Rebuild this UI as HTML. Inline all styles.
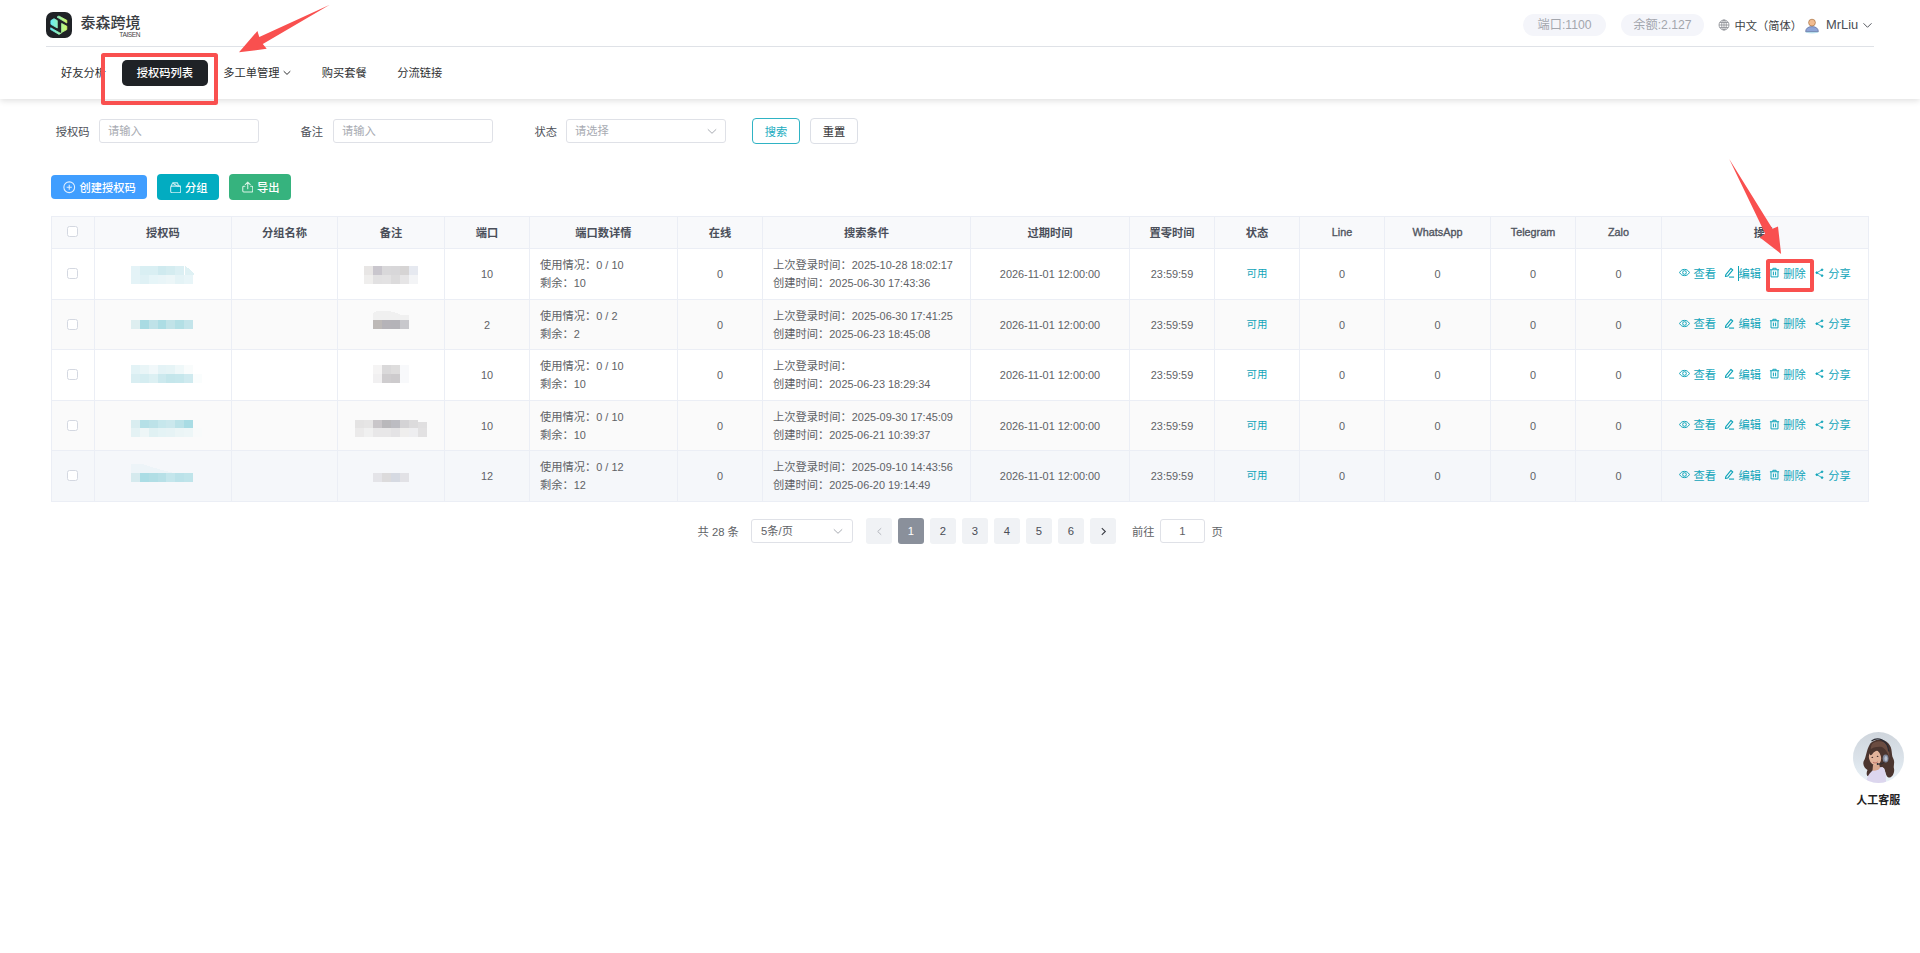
<!DOCTYPE html>
<html lang="zh-CN">
<head>
<meta charset="utf-8">
<title>授权码列表</title>
<style>
*{box-sizing:border-box;margin:0;padding:0}
html,body{width:1920px;height:953px;overflow:hidden;background:#fff}
body{font-family:"Liberation Sans","Noto Sans CJK SC",sans-serif;font-size:11.25px;color:#606266;position:relative}
.abs{position:absolute}
/* header */
#hdr{position:absolute;left:0;top:0;width:1920px;height:99px;background:#fff;box-shadow:0 2px 6px rgba(0,0,0,.12)}
#hline{position:absolute;left:46px;top:46px;width:1828px;height:1px;background:#dfe2e7}
#logo{position:absolute;left:46px;top:12px;width:26px;height:26px}
#brand{position:absolute;left:80.5px;top:12px;font-size:15px;font-weight:500;color:#3a3d42;line-height:22px;white-space:nowrap;letter-spacing:0}
#brand2{position:absolute;left:110px;top:30.5px;width:30px;font-size:6.6px;color:#444;line-height:8px;text-align:right;letter-spacing:-.45px}
.pill{position:absolute;top:14px;height:22px;border-radius:11px;background:#f4f5fa;color:#a3a6ad;font-size:12.2px;line-height:23.6px;text-align:center;white-space:nowrap}
.nav{position:absolute;top:60px;height:26px;line-height:26px;font-size:11.25px;color:#303133;white-space:nowrap}
.nav.on{left:122px;width:86px;background:#1f2226;color:#fff;border-radius:5px;text-align:center;font-weight:500}
/* filter */
.lbl{position:absolute;top:119.5px;height:24px;line-height:24px;font-size:11.25px;color:#4d5058;white-space:nowrap}
.inp{position:absolute;top:119px;height:24px;width:160px;border:1px solid #dfe1e7;border-radius:3px;background:#fff;line-height:23.5px;padding-left:8px;font-size:11.25px;color:#a8abb2;white-space:nowrap}
.btn{position:absolute;border-radius:4px;text-align:center;white-space:nowrap;font-size:11.25px}
/* table */
#tbl{position:absolute;left:51px;top:216px;width:1818px;border-collapse:collapse;table-layout:fixed;font-size:11.25px}
.n{font-size:10.9px}
#tbl th.n{font-size:10.8px;color:#50555f;font-weight:400;-webkit-text-stroke:.35px #50555f}
#tbl th,#tbl td{border:1px solid #ebeef5;text-align:center;vertical-align:middle;padding:0;overflow:hidden;white-space:nowrap}
#tbl th{height:32px;padding-bottom:2px;background:#f8f9fb;color:#4a4f5a;font-weight:700}
#tbl td{background:#fff;color:#606266;line-height:18px}
#tbl tr.s td{background:#fafafa}
#tbl tr.h td{background:#f5f7fa}
#tbl td.l{text-align:left;padding-left:10px}
.cb{display:inline-block;width:11px;height:11px;border:1px solid #d4d8e1;border-radius:2.5px;background:#fff;vertical-align:middle;position:relative;left:-.7px;top:-1.5px}
#tbl th .cb{top:-.6px}
#tbl td.ok{color:#0fa4b9;font-size:10.4px}
#tbl td.ops{color:#0fa4b9;font-size:11.25px;text-align:left !important;padding-left:17px !important;padding-bottom:1px !important}
.ops span{display:inline-block;margin-right:7.9px}
.ops svg{width:11px;height:11px;vertical-align:-.8px;margin-right:3.5px}
.mz{position:absolute}
/* pager */
.pg{position:absolute;top:518px;width:26px;height:26px;line-height:27px;border-radius:3px;background:#f0f2f5;color:#4a4d55;text-align:center;font-size:11.25px}
.pg.on{background:#8a909b;color:#fff}
.pt{position:absolute;top:518.7px;height:26px;line-height:26px;font-size:11.25px;color:#606266;white-space:nowrap}
</style>
</head>
<body>
<div id="hdr">
<svg id="logo" viewBox="0 0 26 26"><defs><linearGradient id="lg" x1="4" y1="0" x2="21.5" y2="0" gradientUnits="userSpaceOnUse"><stop offset="0" stop-color="#63ecff"/><stop offset=".5" stop-color="#96f2b4"/><stop offset="1" stop-color="#d6fb62"/></linearGradient></defs>
<rect width="26" height="26" rx="7" fill="#1f2226"/>
<g fill="url(#lg)" stroke="url(#lg)" stroke-width=".8" stroke-linejoin="round">
<path d="M4.9 8.6L8 6.7L11.3 8.6V16L4.9 12.3Z"/>
<path d="M11 5.100L12.900 4L20.800 8.300V11Z"/>
<path d="M15.600 11.400L20.800 14.200V17.600L15.600 20.500Z"/>
<path d="M4.700 15.800V17.600L13 22.400L15.400 21.100V20.700L14.300 21.200Z"/>
</g></svg>
<div id="brand">泰森跨境</div>
<div id="brand2">TAISEN</div>
<div class="pill" style="left:1523px;width:83px">端口:1100</div>
<div class="pill" style="left:1621px;width:83px">余额:2.127</div>
<svg class="abs" style="left:1718px;top:19px;width:12px;height:12px" viewBox="0 0 12 12" fill="none" stroke="#8a8d93" stroke-width=".8"><circle cx="6" cy="6" r="5"/><ellipse cx="6" cy="6" rx="2.3" ry="5"/><path d="M1 6H11M6 1V11M1.8 3.5H10.2M1.8 8.5H10.2"/></svg>
<div class="abs" style="left:1734.5px;top:14.6px;line-height:22px;font-size:11.25px;color:#3c3f45;white-space:nowrap">中文（简体）</div>
<svg class="abs" style="left:1804px;top:17px;width:16px;height:17px" viewBox="0 0 16 17"><ellipse cx="8" cy="15.2" rx="6.5" ry="1.3" fill="#bfe6f2"/><path d="M1.6 14.6C1.8 11.2 4.3 9.6 8 9.6S14.2 11.2 14.4 14.6Z" fill="#8ea4d8" stroke="#5f6f9c" stroke-width=".7"/><circle cx="8" cy="5.6" r="3.4" fill="#f1bb90" stroke="#a8703f" stroke-width=".7"/></svg>
<div class="abs" style="left:1826px;top:13.7px;line-height:22px;font-size:12.9px;color:#4b4e55;white-space:nowrap">MrLiu</div>
<svg class="abs" style="left:1863px;top:21.5px;width:9px;height:7px" viewBox="0 0 9 7" fill="none" stroke="#55585f" stroke-width="1"><path d="M.5 1.300L4.500 5.300L8.500 1.300"/></svg>
<div id="hline"></div>
<div class="nav" style="left:61px">好友分析</div>
<div class="nav on">授权码列表</div>
<div class="nav" style="left:223.3px">多工单管理</div>
<svg class="abs" style="left:283px;top:70px;width:8px;height:6px" viewBox="0 0 8 6" fill="none" stroke="#303133" stroke-width="1"><path d="M.7 1.2L4 4.4L7.3 1.2"/></svg>
<div class="nav" style="left:321.7px">购买套餐</div>
<div class="nav" style="left:397.3px">分流链接</div>
</div>

<div class="lbl" style="left:55.7px">授权码</div>
<div class="inp" style="left:99px">请输入</div>
<div class="lbl" style="left:300.5px">备注</div>
<div class="inp" style="left:333px">请输入</div>
<div class="lbl" style="left:534.5px">状态</div>
<div class="inp" style="left:566px">请选择</div>
<svg class="abs" style="left:706.5px;top:128px;width:10px;height:7px" viewBox="0 0 10 7" fill="none" stroke="#a8abb2" stroke-width="1"><path d="M.8 1.3L5 5.3L9.2 1.3"/></svg>
<div class="btn" style="left:752px;top:118px;width:48px;height:26px;line-height:26px;border:1.3px solid #2fb3c4;color:#20acc0;background:#fff">搜索</div>
<div class="btn" style="left:810px;top:118px;width:48px;height:26px;line-height:26px;border:1px solid #dcdfe6;color:#303133;background:#fff">重置</div>
<div class="btn" style="left:51px;top:175px;width:96px;height:24px;line-height:24px;background:#409eff;color:#fff;font-weight:500;text-align:left"><svg class="abs" style="left:12px;top:6px;width:12.5px;height:12.5px" viewBox="0 0 13 13" fill="none" stroke="#e3f0ff" stroke-width="1.1"><circle cx="6.5" cy="6.5" r="5.6"/><path d="M6.5 3.8V9.2M3.8 6.5H9.2"/></svg><span class="abs" style="left:28.5px;top:1.2px">创建授权码</span></div>
<div class="btn" style="left:157px;top:174px;width:62px;height:26px;line-height:26px;background:#02acc1;color:#fff;font-weight:500;text-align:left"><svg class="abs" style="left:12.5px;top:7.5px;width:11.5px;height:11.5px" viewBox="0 0 12 12" fill="none" stroke="#c9eef3" stroke-width="1.1" stroke-linejoin="round"><path d="M.9 4.800L2.800 .9H7.800L9 4.200"/><path d="M3.200 1.300L7.400 4.300H11"/><rect x=".7" y="4.300" width="10.500" height="6.900" rx="1.500"/></svg><span class="abs" style="left:28px;top:1.2px">分组</span></div>
<div class="btn" style="left:229px;top:174px;width:62px;height:26px;line-height:26px;background:#36b37e;color:#fff;font-weight:500;text-align:left"><svg class="abs" style="left:12.5px;top:7px;width:11.5px;height:12px" viewBox="0 0 12 12" fill="none" stroke="#d9f3e6" stroke-width="1.1" stroke-linejoin="round" stroke-linecap="round"><path d="M6 7.8V1M3.4 3.4L6 .8L8.6 3.4"/><path d="M3 5.2H1.8Q.8 5.2 .8 6.2V10Q.8 11.2 1.8 11.2H10.2Q11.2 11.2 11.2 10V6.2Q11.2 5.2 10.2 5.2H9"/></svg><span class="abs" style="left:28px;top:1.2px">导出</span></div>

<table id="tbl"><colgroup><col style="width:43px"><col style="width:137px"><col style="width:106px"><col style="width:107px"><col style="width:85px"><col style="width:148px"><col style="width:85px"><col style="width:208px"><col style="width:159px"><col style="width:85px"><col style="width:85px"><col style="width:85px"><col style="width:106px"><col style="width:85px"><col style="width:86px"><col style="width:207px"></colgroup>
<thead><tr><th><span class="cb"></span></th><th>授权码</th><th>分组名称</th><th>备注</th><th>端口</th><th>端口数详情</th><th>在线</th><th>搜索条件</th><th>过期时间</th><th>置零时间</th><th>状态</th><th class="n">Line</th><th class="n">WhatsApp</th><th class="n">Telegram</th><th class="n">Zalo</th><th>操作</th></tr></thead>
<tbody>
<tr class="" style="height:51px"><td><span class="cb"></span></td><td></td><td></td><td></td><td class="n">10</td><td class="l">使用情况：<span class="n">0 / 10</span><br>剩余：<span class="n">10</span></td><td class="n">0</td><td class="l">上次登录时间：<span class="n">2025-10-28 18:02:17</span><br>创建时间：<span class="n">2025-06-30 17:43:36</span></td><td class="n">2026-11-01 12:00:00</td><td class="n">23:59:59</td><td class="ok">可用</td><td class="n">0</td><td class="n">0</td><td class="n">0</td><td class="n">0</td><td class="ops"><span><svg viewBox="0 0 12 12" fill="none" stroke="#0fa4b9" stroke-width="1.08"><path d="M.6 6C2 3.6 3.8 2.6 6 2.6S10 3.6 11.4 6C10 8.4 8.2 9.4 6 9.4S2 8.4 .6 6Z"/><circle cx="6" cy="6" r="2"/></svg>查看</span><span><svg viewBox="0 0 12 12" fill="none" stroke="#0fa4b9" stroke-width="1.25" stroke-linejoin="round"><path d="M2 8.2L7.6 1.6L9.6 3.2L4.2 9.8L1.6 10.4Z"/><path d="M5.5 11H11"/></svg>编辑</span><span><svg viewBox="0 0 12 12" fill="none" stroke="#0fa4b9" stroke-width="1.08"><path d="M1 3H11M4.2 3V1.4H7.8V3M2.2 3V10.8H9.8V3M4.8 5V9M7.2 5V9"/></svg>删除</span><span><svg viewBox="0 0 12 12" fill="#0fa4b9" stroke="#0fa4b9" stroke-width=".9"><circle cx="3" cy="6.200" r=".95"/><circle cx="8.800" cy="3" r=".95"/><circle cx="8.800" cy="9.400" r=".95"/><path d="M3 6.200L8.800 3M3 6.200L8.800 9.400" fill="none"/></svg>分享</span></td></tr>
<tr class="s" style="height:50px"><td><span class="cb"></span></td><td></td><td></td><td></td><td class="n">2</td><td class="l">使用情况：<span class="n">0 / 2</span><br>剩余：<span class="n">2</span></td><td class="n">0</td><td class="l">上次登录时间：<span class="n">2025-06-30 17:41:25</span><br>创建时间：<span class="n">2025-06-23 18:45:08</span></td><td class="n">2026-11-01 12:00:00</td><td class="n">23:59:59</td><td class="ok">可用</td><td class="n">0</td><td class="n">0</td><td class="n">0</td><td class="n">0</td><td class="ops"><span><svg viewBox="0 0 12 12" fill="none" stroke="#0fa4b9" stroke-width="1.08"><path d="M.6 6C2 3.6 3.8 2.6 6 2.6S10 3.6 11.4 6C10 8.4 8.2 9.4 6 9.4S2 8.4 .6 6Z"/><circle cx="6" cy="6" r="2"/></svg>查看</span><span><svg viewBox="0 0 12 12" fill="none" stroke="#0fa4b9" stroke-width="1.25" stroke-linejoin="round"><path d="M2 8.2L7.6 1.6L9.6 3.2L4.2 9.8L1.6 10.4Z"/><path d="M5.5 11H11"/></svg>编辑</span><span><svg viewBox="0 0 12 12" fill="none" stroke="#0fa4b9" stroke-width="1.08"><path d="M1 3H11M4.2 3V1.4H7.8V3M2.2 3V10.8H9.8V3M4.8 5V9M7.2 5V9"/></svg>删除</span><span><svg viewBox="0 0 12 12" fill="#0fa4b9" stroke="#0fa4b9" stroke-width=".9"><circle cx="3" cy="6.200" r=".95"/><circle cx="8.800" cy="3" r=".95"/><circle cx="8.800" cy="9.400" r=".95"/><path d="M3 6.200L8.800 3M3 6.200L8.800 9.400" fill="none"/></svg>分享</span></td></tr>
<tr class="" style="height:51px"><td><span class="cb"></span></td><td></td><td></td><td></td><td class="n">10</td><td class="l">使用情况：<span class="n">0 / 10</span><br>剩余：<span class="n">10</span></td><td class="n">0</td><td class="l">上次登录时间：<span class="n"></span><br>创建时间：<span class="n">2025-06-23 18:29:34</span></td><td class="n">2026-11-01 12:00:00</td><td class="n">23:59:59</td><td class="ok">可用</td><td class="n">0</td><td class="n">0</td><td class="n">0</td><td class="n">0</td><td class="ops"><span><svg viewBox="0 0 12 12" fill="none" stroke="#0fa4b9" stroke-width="1.08"><path d="M.6 6C2 3.6 3.8 2.6 6 2.6S10 3.6 11.4 6C10 8.4 8.2 9.4 6 9.4S2 8.4 .6 6Z"/><circle cx="6" cy="6" r="2"/></svg>查看</span><span><svg viewBox="0 0 12 12" fill="none" stroke="#0fa4b9" stroke-width="1.25" stroke-linejoin="round"><path d="M2 8.2L7.6 1.6L9.6 3.2L4.2 9.8L1.6 10.4Z"/><path d="M5.5 11H11"/></svg>编辑</span><span><svg viewBox="0 0 12 12" fill="none" stroke="#0fa4b9" stroke-width="1.08"><path d="M1 3H11M4.2 3V1.4H7.8V3M2.2 3V10.8H9.8V3M4.8 5V9M7.2 5V9"/></svg>删除</span><span><svg viewBox="0 0 12 12" fill="#0fa4b9" stroke="#0fa4b9" stroke-width=".9"><circle cx="3" cy="6.200" r=".95"/><circle cx="8.800" cy="3" r=".95"/><circle cx="8.800" cy="9.400" r=".95"/><path d="M3 6.200L8.800 3M3 6.200L8.800 9.400" fill="none"/></svg>分享</span></td></tr>
<tr class="s" style="height:50px"><td><span class="cb"></span></td><td></td><td></td><td></td><td class="n">10</td><td class="l">使用情况：<span class="n">0 / 10</span><br>剩余：<span class="n">10</span></td><td class="n">0</td><td class="l">上次登录时间：<span class="n">2025-09-30 17:45:09</span><br>创建时间：<span class="n">2025-06-21 10:39:37</span></td><td class="n">2026-11-01 12:00:00</td><td class="n">23:59:59</td><td class="ok">可用</td><td class="n">0</td><td class="n">0</td><td class="n">0</td><td class="n">0</td><td class="ops"><span><svg viewBox="0 0 12 12" fill="none" stroke="#0fa4b9" stroke-width="1.08"><path d="M.6 6C2 3.6 3.8 2.6 6 2.6S10 3.6 11.4 6C10 8.4 8.2 9.4 6 9.4S2 8.4 .6 6Z"/><circle cx="6" cy="6" r="2"/></svg>查看</span><span><svg viewBox="0 0 12 12" fill="none" stroke="#0fa4b9" stroke-width="1.25" stroke-linejoin="round"><path d="M2 8.2L7.6 1.6L9.6 3.2L4.2 9.8L1.6 10.4Z"/><path d="M5.5 11H11"/></svg>编辑</span><span><svg viewBox="0 0 12 12" fill="none" stroke="#0fa4b9" stroke-width="1.08"><path d="M1 3H11M4.2 3V1.4H7.8V3M2.2 3V10.8H9.8V3M4.8 5V9M7.2 5V9"/></svg>删除</span><span><svg viewBox="0 0 12 12" fill="#0fa4b9" stroke="#0fa4b9" stroke-width=".9"><circle cx="3" cy="6.200" r=".95"/><circle cx="8.800" cy="3" r=".95"/><circle cx="8.800" cy="9.400" r=".95"/><path d="M3 6.200L8.800 3M3 6.200L8.800 9.400" fill="none"/></svg>分享</span></td></tr>
<tr class="h" style="height:51px"><td><span class="cb"></span></td><td></td><td></td><td></td><td class="n">12</td><td class="l">使用情况：<span class="n">0 / 12</span><br>剩余：<span class="n">12</span></td><td class="n">0</td><td class="l">上次登录时间：<span class="n">2025-09-10 14:43:56</span><br>创建时间：<span class="n">2025-06-20 19:14:49</span></td><td class="n">2026-11-01 12:00:00</td><td class="n">23:59:59</td><td class="ok">可用</td><td class="n">0</td><td class="n">0</td><td class="n">0</td><td class="n">0</td><td class="ops"><span><svg viewBox="0 0 12 12" fill="none" stroke="#0fa4b9" stroke-width="1.08"><path d="M.6 6C2 3.6 3.8 2.6 6 2.6S10 3.6 11.4 6C10 8.4 8.2 9.4 6 9.4S2 8.4 .6 6Z"/><circle cx="6" cy="6" r="2"/></svg>查看</span><span><svg viewBox="0 0 12 12" fill="none" stroke="#0fa4b9" stroke-width="1.25" stroke-linejoin="round"><path d="M2 8.2L7.6 1.6L9.6 3.2L4.2 9.8L1.6 10.4Z"/><path d="M5.5 11H11"/></svg>编辑</span><span><svg viewBox="0 0 12 12" fill="none" stroke="#0fa4b9" stroke-width="1.08"><path d="M1 3H11M4.2 3V1.4H7.8V3M2.2 3V10.8H9.8V3M4.8 5V9M7.2 5V9"/></svg>删除</span><span><svg viewBox="0 0 12 12" fill="#0fa4b9" stroke="#0fa4b9" stroke-width=".9"><circle cx="3" cy="6.200" r=".95"/><circle cx="8.800" cy="3" r=".95"/><circle cx="8.800" cy="9.400" r=".95"/><path d="M3 6.200L8.800 3M3 6.200L8.800 9.400" fill="none"/></svg>分享</span></td></tr>
</tbody></table>

<div class="pt" style="left:697.5px">共 28 条</div>
<div class="inp" style="left:751px;top:519px;width:102px;color:#606266;padding-left:9px">5条/页</div>
<svg class="abs" style="left:833px;top:527.5px;width:10px;height:7px" viewBox="0 0 10 7" fill="none" stroke="#a8abb2" stroke-width="1"><path d="M.8 1.3L5 5.3L9.2 1.3"/></svg>
<div class="pg" style="left:866px"><svg class="abs" style="left:9.5px;top:8.5px;width:7px;height:9px" viewBox="0 0 7 9" fill="none" stroke="#b4b7be" stroke-width="1"><path d="M5.200 1.200L1.700 4.500L5.200 7.800"/></svg></div>
<div class="pg on" style="left:898px">1</div>
<div class="pg" style="left:930px">2</div>
<div class="pg" style="left:962px">3</div>
<div class="pg" style="left:994px">4</div>
<div class="pg" style="left:1026px">5</div>
<div class="pg" style="left:1058px">6</div>
<div class="pg" style="left:1090px"><svg class="abs" style="left:9.500px;top:8.500px;width:7px;height:9px" viewBox="0 0 7 9" fill="none" stroke="#3a3d44" stroke-width="1.100"><path d="M1.800 1.200L5.300 4.500L1.800 7.800"/></svg></div>
<div class="pt" style="left:1132px">前往</div>
<div class="inp" style="left:1160px;top:519px;width:45px;color:#606266;padding-left:0;text-align:center">1</div>
<div class="pt" style="left:1211.5px">页</div>

<svg class="abs" style="left:0;top:0;width:1920px;height:953px" viewBox="0 0 1920 953" shape-rendering="crispEdges"><rect x="131" y="266" width="9.1" height="9.2" fill="#e4f3f7"/><rect x="139.87" y="266" width="9.1" height="9.2" fill="#d9eff3"/><rect x="148.74" y="266" width="9.1" height="9.2" fill="#d9eff3"/><rect x="157.61" y="266" width="9.1" height="9.2" fill="#cfeaef"/><rect x="166.48" y="266" width="9.1" height="9.2" fill="#d4ecf0"/><rect x="175.35" y="266" width="9.1" height="9.2" fill="#dbeff3"/><path d="M185 266V275.200H194V273C191 270 188 268 185 266Z" fill="#dff1f4"/><rect x="131" y="275" width="9.1" height="8.8" fill="#e4f3f7"/><rect x="139.87" y="275" width="9.1" height="8.8" fill="#dff1f5"/><rect x="148.74" y="275" width="9.1" height="8.8" fill="#e6f5f8"/><rect x="157.61" y="275" width="9.1" height="8.8" fill="#e9f5f8"/><rect x="166.48" y="275" width="9.1" height="8.8" fill="#ecf6f8"/><rect x="175.35" y="275" width="9.1" height="8.8" fill="#e4f3f6"/><rect x="184.22" y="275" width="9.1" height="8.8" fill="#e8f5f8"/><rect x="364" y="266" width="9.3" height="9.2" fill="#e8e6e5"/><rect x="373" y="266" width="9.3" height="9.2" fill="#c9c6cd"/><rect x="382" y="266" width="9.3" height="9.2" fill="#d9d8da"/><rect x="391" y="266" width="9.3" height="9.2" fill="#d8d7d9"/><rect x="400" y="266" width="9.3" height="9.2" fill="#d6d4d4"/><rect x="409" y="266" width="9.3" height="9.2" fill="#e6e9f0"/><rect x="364" y="275" width="9.3" height="8.8" fill="#efeeed"/><rect x="373" y="275" width="9.3" height="8.8" fill="#e2e1e2"/><rect x="382" y="275" width="9.3" height="8.8" fill="#e3e2e3"/><rect x="391" y="275" width="9.3" height="8.8" fill="#dcdbdc"/><rect x="400" y="275" width="9.3" height="8.8" fill="#e6e5e6"/><rect x="409" y="275" width="9.3" height="8.8" fill="#f3f4f6"/><rect x="131" y="320.3" width="9.1" height="8.6" fill="#deeef0"/><rect x="139.87" y="320.3" width="9.1" height="8.6" fill="#a9dbe3"/><rect x="148.74" y="320.3" width="9.1" height="8.6" fill="#bfe2e8"/><rect x="157.61" y="320.3" width="9.1" height="8.6" fill="#addde4"/><rect x="166.48" y="320.3" width="9.1" height="8.6" fill="#c1e3e8"/><rect x="175.35" y="320.3" width="9.1" height="8.6" fill="#b3dfe5"/><rect x="184.22" y="320.3" width="9.1" height="8.6" fill="#c3e4ea"/><path d="M373 320.300V316Q373 311 378 311H388Q395 311.500 400 314.500H409V320.300Z" fill="#f0f0f0"/><rect x="373" y="320.3" width="9.3" height="8.6" fill="#bdb9b7"/><rect x="382" y="320.3" width="9.3" height="8.6" fill="#b5b3b8"/><rect x="391" y="320.3" width="9.3" height="8.6" fill="#b4b3b8"/><rect x="400" y="320.3" width="9.3" height="8.6" fill="#c8c8cc"/><rect x="131" y="365.3" width="9.1" height="8.9" fill="#e3f3f6"/><rect x="139.87" y="365.3" width="9.1" height="8.9" fill="#e9f5f7"/><rect x="148.74" y="365.3" width="9.1" height="8.9" fill="#f1f8fa"/><rect x="157.61" y="365.3" width="9.1" height="8.9" fill="#e4f3f6"/><rect x="166.48" y="365.3" width="9.1" height="8.9" fill="#e6f4f6"/><rect x="175.35" y="365.3" width="9.1" height="8.9" fill="#eff8f9"/><rect x="184.22" y="365.3" width="9.1" height="8.9" fill="#f9fcfc"/><rect x="131" y="374" width="9.1" height="8.8" fill="#d9eef2"/><rect x="139.87" y="374" width="9.1" height="8.8" fill="#d5edf1"/><rect x="148.74" y="374" width="9.1" height="8.8" fill="#dcf0f3"/><rect x="157.61" y="374" width="9.1" height="8.8" fill="#cce9ee"/><rect x="166.48" y="374" width="9.1" height="8.8" fill="#c4e6eb"/><rect x="175.35" y="374" width="9.1" height="8.8" fill="#c6e7ec"/><rect x="184.22" y="374" width="9.1" height="8.8" fill="#cfeaef"/><rect x="193.09" y="374" width="9.1" height="8.8" fill="#fafdfd"/><rect x="373" y="365.3" width="9.3" height="8.9" fill="#f5f4f4"/><rect x="382" y="365.3" width="9.3" height="8.9" fill="#dad9da"/><rect x="391" y="365.3" width="9.3" height="8.9" fill="#dedddd"/><rect x="400" y="365.3" width="9.3" height="8.9" fill="#f8f9fb"/><rect x="373" y="374" width="9.3" height="8.8" fill="#f1f0f1"/><rect x="382" y="374" width="9.3" height="8.8" fill="#cfcdcf"/><rect x="391" y="374" width="9.3" height="8.8" fill="#cdcbcd"/><rect x="400" y="374" width="9.3" height="8.8" fill="#f8f9fb"/><rect x="131" y="419.8" width="9.1" height="8.4" fill="#d9edf0"/><rect x="139.87" y="419.8" width="9.1" height="8.4" fill="#b5e0e7"/><rect x="148.74" y="419.8" width="9.1" height="8.4" fill="#bce2e8"/><rect x="157.61" y="419.8" width="9.1" height="8.4" fill="#c6e7ec"/><rect x="166.48" y="419.8" width="9.1" height="8.4" fill="#cbe8ed"/><rect x="175.35" y="419.8" width="9.1" height="8.4" fill="#bbe2e8"/><rect x="184.22" y="419.8" width="9.1" height="8.4" fill="#a9dce4"/><rect x="131" y="428" width="9.1" height="9" fill="#e4f2f4"/><rect x="139.87" y="428" width="9.1" height="9" fill="#eef6f7"/><rect x="148.74" y="428" width="9.1" height="9" fill="#e0f1f3"/><rect x="157.61" y="428" width="9.1" height="9" fill="#e4f3f5"/><rect x="166.48" y="428" width="9.1" height="9" fill="#e6f3f5"/><rect x="175.35" y="428" width="9.1" height="9" fill="#ebf5f6"/><rect x="184.22" y="428" width="9.1" height="9" fill="#edf6f7"/><rect x="193.09" y="428" width="9.1" height="9" fill="#f8fafa"/><rect x="355" y="419.8" width="9.3" height="8.4" fill="#e4e3e3"/><rect x="364" y="419.8" width="9.3" height="8.4" fill="#e6e5e5"/><rect x="373" y="419.8" width="9.3" height="8.4" fill="#c9c6c9"/><rect x="382" y="419.8" width="9.3" height="8.4" fill="#b9b8bb"/><rect x="391" y="419.8" width="9.3" height="8.4" fill="#bcbcc2"/><rect x="400" y="419.8" width="9.3" height="8.4" fill="#d4d3d5"/><rect x="409" y="419.8" width="9.3" height="8.4" fill="#dcdbdc"/><path d="M418 421.500Q423 421.500 427.200 422.500V428.200H418Z" fill="#e0dfe0"/><rect x="355" y="428" width="9.3" height="9" fill="#ebeaea"/><rect x="364" y="428" width="9.3" height="9" fill="#f0f0f0"/><rect x="373" y="428" width="9.3" height="9" fill="#e8e7e8"/><rect x="382" y="428" width="9.3" height="9" fill="#e8e7e8"/><rect x="391" y="428" width="9.3" height="9" fill="#e4e3e5"/><rect x="400" y="428" width="9.3" height="9" fill="#efeeed"/><rect x="409" y="428" width="9.3" height="9" fill="#eeeef0"/><rect x="418" y="428" width="9.3" height="9" fill="#e2e1e2"/><path d="M131 464H142Q160 470 176 473.500H131Z" fill="#edf4f8"/><rect x="131" y="473" width="9.1" height="9" fill="#d5eaee"/><rect x="139.87" y="473" width="9.1" height="9" fill="#abdde5"/><rect x="148.74" y="473" width="9.1" height="9" fill="#b1dee5"/><rect x="157.61" y="473" width="9.1" height="9" fill="#b7e0e7"/><rect x="166.48" y="473" width="9.1" height="9" fill="#c4e6ec"/><rect x="175.35" y="473" width="9.1" height="9" fill="#bbe2e9"/><rect x="184.22" y="473" width="9.1" height="9" fill="#bfe4ea"/><rect x="373" y="473" width="9.3" height="9" fill="#e4e4e8"/><rect x="382" y="473" width="9.3" height="9" fill="#dcdbdc"/><rect x="391" y="473" width="9.3" height="9" fill="#d6dae2"/><rect x="400" y="473" width="9.3" height="9" fill="#e2e2e6"/></svg>
<svg class="abs" style="left:1853px;top:731.8px;width:51px;height:51px" viewBox="0 0 51 51"><defs><linearGradient id="av" x1="0" y1="0" x2="0" y2="1"><stop offset="0" stop-color="#cfd5dc"/><stop offset=".6" stop-color="#dde5ec"/><stop offset="1" stop-color="#eaf2f8"/></linearGradient><clipPath id="avc"><circle cx="25.5" cy="25.5" r="25.5"/></clipPath></defs>
<circle cx="25.5" cy="25.5" r="25.5" fill="url(#av)"/>
<g clip-path="url(#avc)">
<path d="M16.5 13C19 7.500 30 5.500 35.500 11.500C40 16.500 38 22 40 26C42.500 30.500 40 33 41 36.500C42 41 38.500 46.500 35.500 45.500C33 44.500 32.500 40 31 36L22 36C19 38 18.500 42 16 44C13.500 45 13 41 14.500 38C11.500 36.500 9 32 11 28.500C13 25.500 13.500 18 16.500 13Z" fill="#4b352f"/>
<path d="M19 12C23 8 31 8.500 34 13C36.500 17 36 22 37 26C35 22 33 17 29 15C25 14 21 15 18 19C17.500 16.500 18 14 19 12Z" fill="#6b4c41"/>
<path d="M13 51C13.500 46 15.500 42 18.500 39.500L24 35.500L29.500 35C32 37 33 41 33 51Z" fill="#dcd6ee"/>
<path d="M20 33L26 31L27 36C25 38.500 22 39 19.500 38.500Z" fill="#d9a88f"/>
<ellipse cx="22" cy="25.500" rx="6" ry="7.800" fill="#e2b39b" transform="rotate(-14 22 25.500)"/>
<path d="M15.800 20C18 14.500 26 13.500 30.500 18.500C27 17.500 22 18 19 22.500C17.500 24 16.500 23 15.800 20Z" fill="#4b352f"/>
<ellipse cx="19.300" cy="25.300" rx=".9" ry=".6" fill="#3a2a2a"/><ellipse cx="24.600" cy="24.300" rx=".9" ry=".6" fill="#3a2a2a"/>
<path d="M20 30.200C21.500 31.300 23.500 31.100 24.800 29.800" fill="none" stroke="#b5645e" stroke-width=".8"/>
<ellipse cx="32.600" cy="26.500" rx="2.900" ry="3.900" fill="#7f879b"/><ellipse cx="32.900" cy="26.500" rx="1.500" ry="2.500" fill="#b9bfcd"/>
<path d="M18.500 9C24.500 4.500 34.500 7 35.800 19.500" fill="none" stroke="#2b2b33" stroke-width="1.200"/>
<path d="M31.500 30C29.500 32 27 32.300 24.800 32" fill="none" stroke="#2b2b33" stroke-width=".9"/><circle cx="24.600" cy="32" r=".9" fill="#2b2b33"/>
</g></svg>
<div class="abs" style="left:1848.3px;top:792px;width:60px;text-align:center;font-size:11px;line-height:16px;font-weight:700;color:#222;white-space:nowrap">人工客服</div>

<div class="abs" style="left:101px;top:53px;width:117px;height:52px;border:4px solid #f9504f;border-radius:2.5px"></div>
<div class="abs" style="left:1766px;top:259px;width:48px;height:33px;border:4px solid #f9504f;border-radius:2.5px"></div>
<div class="abs" style="left:1738px;top:266px;width:1px;height:15px;background:#0fa4b9"></div>
<svg class="abs" style="left:0;top:0;width:1920px;height:953px;pointer-events:none" viewBox="0 0 1920 953"><g fill="#f9504f">
<path d="M329.8 4.7L259.3 37L257.4 31L239 52.3L266.7 48.8L262.8 44.1Z"/>
<path d="M1729.2 159.1L1772.5 228.7L1778 226.4L1781.1 253.9L1759.9 237.4L1765.1 233.5Z"/>
</g></svg>

</body>
</html>
